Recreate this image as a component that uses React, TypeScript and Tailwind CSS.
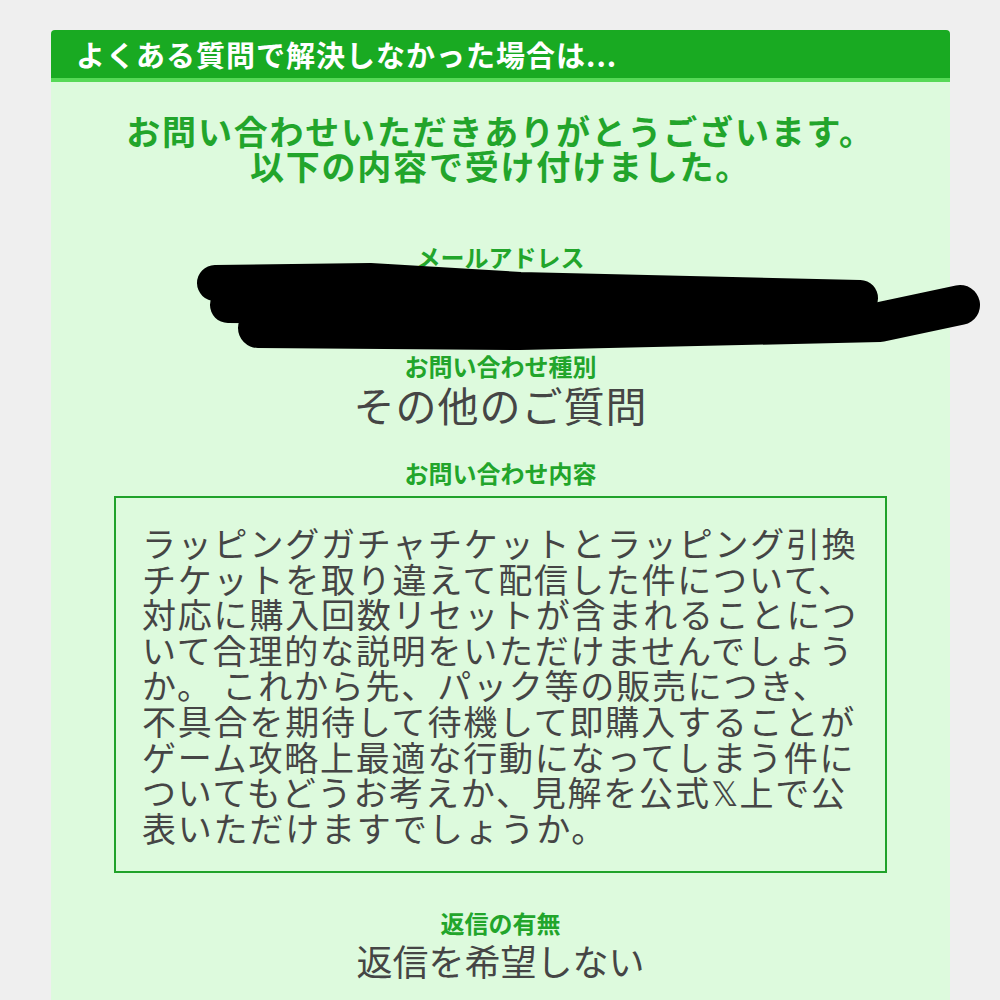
import React from "react";

// ─── Static content ──────────────────────────────────────────────────────────
const FONT = "font-['Noto_Sans_CJK_JP','Noto_Sans',sans-serif]";

const BODY_LINES = [
  "ラッピングガチャチケットとラッピング引換",
  "チケットを取り違えて配信した件について、",
  "対応に購入回数リセットが含まれることにつ",
  "いて合理的な説明をいただけませんでしょう",
  "か。 これから先、パック等の販売につき、",
  "不具合を期待して待機して即購入することが",
  "ゲーム攻略上最適な行動になってしまう件に",
  "ついてもどうお考えか、見解を公式𝕏上で公",
  "表いただけますでしょうか。",
];
// ─────────────────────────────────────────────────────────────────────────────

function Label({ children, className = "" }: { children: React.ReactNode; className?: string }) {
  return (
    <p className={`text-center text-[24px] leading-[24px] font-bold text-[#22a52b] ${className}`}>
      {children}
    </p>
  );
}

function Value({ children, className = "" }: { children: React.ReactNode; className?: string }) {
  return (
    <p className={`text-center leading-[44px] text-[#454545] ${className}`}>
      {children}
    </p>
  );
}

// Marker scribble hiding the e-mail address
function Redaction() {
  return (
    <svg
      className="absolute left-0 top-0 pointer-events-none"
      width="1000"
      height="400"
      viewBox="0 0 1000 400"
      aria-hidden="true"
    >
      <g stroke="#000" fill="none" strokeLinecap="round" strokeLinejoin="round">
        <path d="M215 283 L370 281 L520 290 L860 298" strokeWidth="36" />
        <path d="M228 305 L860 310" strokeWidth="36" />
        <path d="M258 328 L520 330 L880 322 L960 305" strokeWidth="40" />
      </g>
    </svg>
  );
}

export default function App() {
  return (
    <div className={`relative min-h-[1000px] bg-[#efefef] pt-[30px] overflow-hidden ${FONT}`}>
      <div className="ml-[51px] w-[899px] bg-[#ddfadd] rounded-t-[4px] overflow-hidden pb-[40px]">
        {/* Header bar */}
        <div className="h-[52px] bg-[#19aa22] border-b-4 border-[#56d957] flex items-center pl-[25px]">
          <h1 className="text-white font-bold text-[29px] leading-none tracking-[1px]">
            よくある質問で解決しなかった場合は...
          </h1>
        </div>

        {/* Thank-you message */}
        <div className="pt-[31px] text-center text-[#22a52b] font-bold text-[34px] leading-[35px] tracking-[1.8px]">
          <p>お問い合わせいただきありがとうございます。</p>
          <p>以下の内容で受け付けました。</p>
        </div>

        <Label className="mt-[62px]">メールアドレス</Label>
        <Value className="mt-[12px] text-[32px]">example@example.com</Value>

        <Label className="mt-[29px]">お問い合わせ種別</Label>
        <Value className="mt-[4px] text-[41px] tracking-[1px]">その他のご質問</Value>

        <Label className="mt-[35px]">お問い合わせ内容</Label>
        <div className="mt-[11px] mx-[63px] border-2 border-[#20a22a] px-[26px] pt-[27px] pb-[26px]">
          <div className="text-[34px] leading-[35.6px] tracking-[1.8px] text-[#454545] whitespace-nowrap">
            {BODY_LINES.map((line, i) => (
              <p key={i}>{line}</p>
            ))}
          </div>
        </div>

        <Label className="mt-[38px]">返信の有無</Label>
        <Value className="mt-[3px] text-[36px]">返信を希望しない</Value>
      </div>

      <Redaction />
    </div>
  );
}
